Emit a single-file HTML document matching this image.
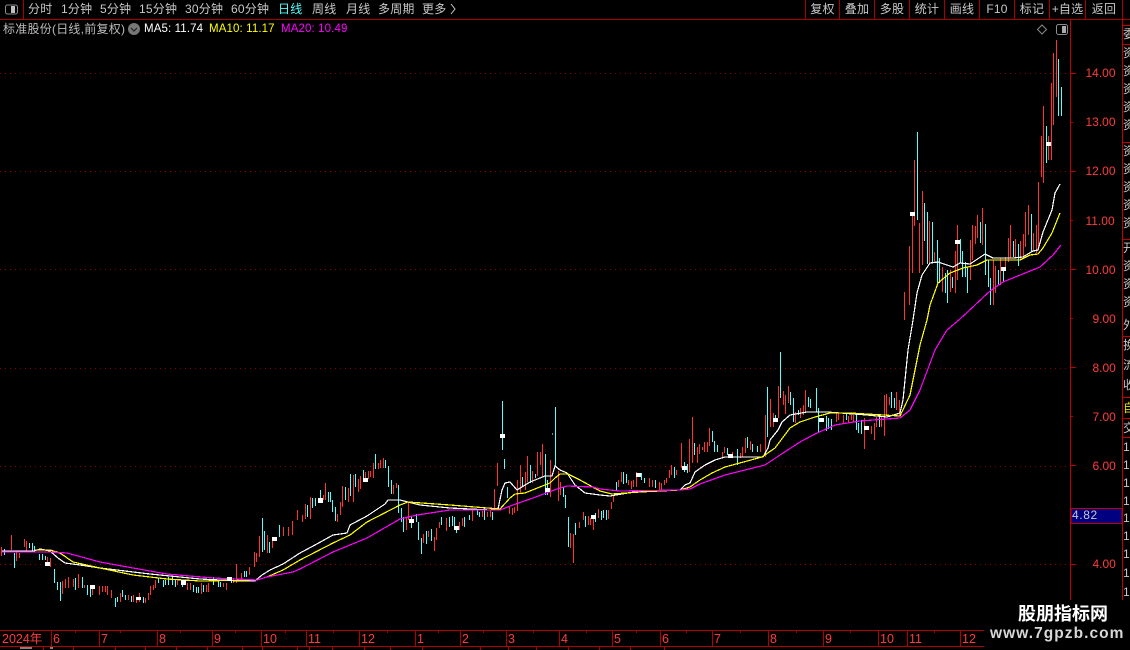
<!DOCTYPE html>
<html lang="zh-CN"><head><meta charset="utf-8"><title>标准股份</title>
<style>
html,body{margin:0;padding:0;background:#000}
#p{position:relative;width:1130px;height:650px;overflow:hidden;background:#000;font-family:"Liberation Sans","Noto Sans CJK SC",sans-serif;color:#c8c8c8}
svg{position:absolute;left:0;top:0}
.t{position:absolute;top:2px;height:16px;line-height:15px;font-size:12px;white-space:nowrap;letter-spacing:.2px}
.c{text-align:center}
.i{position:absolute;top:22px;line-height:14px;font-size:11.5px;white-space:nowrap;letter-spacing:.12px}
.pr{position:absolute;left:1085.5px;font-size:12px;line-height:14px;color:#ff3c3c}
.m{position:absolute;top:631px;font-size:12.5px;line-height:16px;color:#ff3c3c}
.rc{position:absolute;left:1123px;width:7px;overflow:hidden;font-size:12px;line-height:14px;color:#c8c8c8;white-space:nowrap}
#wm{position:absolute;left:984px;top:600px;width:146px;height:50px;background:#000}
#wm b{position:absolute;white-space:nowrap}
</style></head><body><div id="p">
<svg width="1130" height="650" viewBox="0 0 1130 650">
<g shape-rendering="crispEdges" fill="none">
<path stroke="#a80000" d="M0 19.5H1130M23.5 0V19M805.5 0V19M839.5 0V19M874.5 0V19M909.5 0V19M944.5 0V19M979.5 0V19M1014.5 0V19M1049.5 0V19M1085.5 0V19M1122.5 0V19"/>
<path stroke="#8c0000" stroke-dasharray="1 4" d="M0 73.5H1070M0 171.5H1070M0 269.5H1070M0 368.5H1070M0 466.5H1070M0 564.5H1070"/>
<path stroke="#c00000" d="M1070.5 19V600M1122.5 19V600M1122 25.5H1130M1122 44.5H1130M1122 142.5H1130M1122 239.5H1130M1122 336.5H1130M1122 397.5H1130M1122 418.5H1130M1122 437.5H1130"/>
<path stroke="#c00000" d="M1070 73.5H1076M1070 122.5H1073M1070 171.5H1076M1070 220.5H1073M1070 269.5H1076M1070 318.5H1073M1070 367.5H1076M1070 416.5H1073M1070 465.5H1076M1070 564.5H1076"/>
<path stroke="#b00000" d="M0 630.5H984M0 646.5H984M51.5 630V646M99.5 630V646M157.5 630V646M212.5 630V646M261.5 630V646M306.5 630V646M359.5 630V646M415.5 630V646M460.5 630V646M506.5 630V646M559.5 630V646M612.5 630V646M660.5 630V646M712.5 630V646M768.5 630V646M823.5 630V646M878.5 630V646M907.5 630V646M960.5 630V646M75.5 630V633M120.5 630V633M180.5 630V633M235.5 630V633M285.5 630V633M333.5 630V633M387.5 630V633M438.5 630V633M483.5 630V633M533.5 630V633M586.5 630V633M636.5 630V633M686.5 630V633M740.5 630V633M796.5 630V633M850.5 630V633M934.5 630V633M43.5 646V650M73.5 646V650M115.5 646V650M145.5 646V650M176.5 646V650M207.5 646V650M242.5 646V650M262.5 646V650M297.5 646V650M309.5 646V650M332.5 646V650M364.5 646V650M390.5 646V650M422.5 646V650M480.5 646V650M508.5 646V650M536.5 646V650M568.5 646V650M599.5 646V650M630.5 646V650M664.5 646V650"/>
<g transform="translate(.5 0)">
<path stroke="#ff3232" d="M1 547V556M11 535V550M16 552V561M19 553V558M24 539V547M26 541V551M47 557V562M50 558V567M62 581V594M65 579V588M68 577V588M73 579V587M78 574V588M84 585V588M92 587V595M99 586V595M102 586V592M105 586V592M107 586V595M111 590V598M120 593V602M128 595V600M133 595V602M136 597V603M139 593V602M145 598V603M148 593V600M150 586V595M153 585V590M155 580V588M177 580V585M187 583V590M190 583V590M201 583V594M206 585V592M208 583V592M223 583V587M226 583V590M233 578V583M236 564V583M241 573V580M249 567V575M254 552V567M256 553V562M259 536V557M267 535V553M272 540V548M283 527V536M288 527V536M292 521V535M297 510V520M302 515V522M305 504V519M310 497V519M323 495V500M325 483V500M337 514V522M340 502V515M342 486V507M348 488V502M353 475V502M358 479V492M360 476V489M365 472V480M368 471V479M370 471V477M373 463V478M378 463V469M380 460V468M383 458V468M393 485V494M396 483V488M406 518V530M408 502V520M423 534V543M428 531V537M434 537V551M436 528V540M439 522V528M446 518V531M459 522V530M462 518V526M472 510V521M482 511V517M487 512V517M490 510V517M494 489V509M497 463V486M509 507V514M512 508V515M514 507V513M517 480V511M520 465V493M525 472V490M527 456V482M532 471V483M537 452V476M540 452V465M542 444V477M550 460V497M558 471V501M560 482V495M570 533V548M573 534V563M579 522V528M583 512V520M588 516V525M590 518V525M593 517V530M598 509V518M608 510V519M611 502V509M613 496V502M618 480V487M621 472V482M628 480V485M631 481V489M633 480V487M636 472V487M649 478V487M652 480V487M659 482V490M661 483V491M664 480V485M666 478V483M669 470V478M671 465V475M676 470V475M681 443V468M689 439V472M692 417V463M697 447V463M699 444V454M702 447V450M704 442V452M707 442V452M709 428V446M722 452V457M724 447V453M732 452V458M740 453V458M742 447V457M745 438V453M750 441V450M760 444V452M765 415V457M770 399V427M773 413V427M778 386V418M783 391V405M785 395V414M788 386V403M795 412V423M800 408V418M803 405V415M805 390V413M836 412V422M838 413V420M843 415V423M848 416V423M851 415V420M853 415V422M864 418V449M871 426V434M874 423V440M876 417V427M881 416V427M884 395V436M886 394V415M889 397V405M896 392V410M899 400V415M904 292V320M909 246V305M912 215V273M914 160V226M919 223V273M922 191V265M929 221V263M934 252V263M942 267V292M950 270V292M955 251V293M957 225V280M970 240V280M972 225V260M975 226V244M977 215V238M982 208V245M993 260V305M995 266V293M1000 258V285M1005 257V268M1008 238V262M1010 225V258M1015 239V257M1020 241V260M1023 234V258M1025 212V247M1028 205V235M1033 233V250M1036 225V253M1038 182V247M1041 136V177M1043 106V183M1048 136V160M1051 83V160M1053 53V125M1056 40V97"/>
<path stroke="#54ffff" d="M4 549V555M14 553V568M29 543V548M32 543V551M34 546V552M39 554V560M42 554V560M45 556V560M54 569V583M57 582V590M60 582V601M75 578V590M82 577V588M87 585V595M90 588V597M115 598V607M117 597V602M122 590V597M125 595V600M131 596V602M143 597V603M158 578V583M163 580V587M165 580V585M168 577V585M172 577V585M175 580V587M182 580V587M193 585V592M196 587V593M198 587V593M203 585V592M213 577V585M218 580V587M220 582V587M231 578V583M244 571V577M246 571V577M262 518V552M264 531V550M269 542V553M279 525V537M307 505V517M312 498V508M315 498V506M320 490V500M328 492V502M330 492V502M332 500V512M335 507V521M345 487V500M350 474V496M355 474V487M363 470V480M375 454V469M385 460V468M388 466V487M391 480V494M398 485V513M401 508V522M403 517V532M411 517V528M416 514V522M418 522V540M421 538V554M426 531V544M431 529V541M441 517V525M449 517V527M452 516V526M454 517V527M456 528V533M464 517V527M469 515V520M477 509V515M479 512V517M484 508V520M492 512V520M502 401V450M504 459V469M507 487V498M522 477V486M530 465V483M535 474V478M545 454V495M547 480V495M555 407V467M563 487V497M565 495V508M568 517V547M575 523V535M585 516V527M595 513V522M601 511V520M603 510V518M606 510V520M616 482V490M623 472V484M626 474V483M641 473V480M644 478V483M655 480V488M674 467V478M684 462V472M687 464V473M694 443V455M712 431V442M714 441V452M717 445V452M727 448V455M737 449V465M747 437V448M752 444V452M757 446V452M767 387V437M775 415V420M780 352V398M790 392V405M793 398V422M798 410V415M808 397V407M810 399V408M816 388V412M818 408V432M826 416V431M828 418V429M831 419V430M846 413V420M856 415V430M858 423V433M861 420V434M879 417V427M891 392V408M894 398V408M917 132V220M924 203V241M927 212V264M932 222V262M937 240V283M939 258V283M945 273V293M947 270V303M952 277V288M960 239V263M962 251V277M965 262V277M967 267V293M980 222V243M985 224V275M988 260V287M990 278V305M998 270V285M1003 267V282M1013 241V257M1018 244V266M1031 214V252M1046 126V163M1058 59V116M1061 87V116"/>
</g>
<path stroke="#fff" stroke-width="1.2" d="M2 551H34L40 549L50 551L58 558L65 563L80 565L100 568L150 574L200 579L240 581H255L262 575L270 570L283 564L300 553L315 545L333 535L347 533L350 525L367 516L385 504L388 500H400L420 505L450 508L490 510L498 509L502 490L505 483L510 482L517 490L530 482L545 476H552L555 466L560 470L567 473L575 485L585 493L600 495L610 496L640 491L680 490L685 485L690 483L695 472L705 465L715 460L725 457H763L768 448L770 440L778 430L782 422L790 415L807 412H827L867 415L887 417L900 413L903 400L908 350L913 320L917 293L922 275L930 263L938 262L953 267L960 263L970 264L985 254L993 258H1013L1023 257L1033 251L1038 250L1043 232L1052 210L1055 193L1060 184"/>
<path stroke="#ff0" stroke-width="1.2" d="M35 550H50L60 553L73 562L100 568L133 575L167 579L200 581L257 580L267 577L283 570L300 560L333 543L350 535L367 522L400 505L408 502L450 505L500 509L510 498L515 494L525 493L550 483L555 478L560 474H568L580 480L600 491L612 494L640 492L680 490L690 487L700 480L712 473L725 467L762 457L775 448L790 428L800 422L815 417L830 413H850L900 416L910 395L920 345L927 320L930 305L938 283L950 273L963 268L977 265L987 260H1020L1030 255L1038 254L1043 248L1052 233L1060 213"/>
<path stroke="#f0f" stroke-width="1.2" d="M2 552H50L67 553L100 562L133 568L167 574L213 578L257 580L267 577L293 572L300 569L333 552L367 538L400 519L417 515L450 510H500L513 505L533 498L557 489L567 486L593 487L600 489L620 491L680 490L690 489L700 484L725 475L765 465L780 455L800 442L815 434L835 425L860 421L900 418L910 410L920 390L935 350L947 330L960 319L975 305L990 291L1003 282L1040 267L1053 255L1061 245"/>
<path fill="#fff" d="M45 562h5v4h-5zM90 585h5v4h-5zM136 597h5v3h-5zM181 580h5v5h-5zM227 577h5v4h-5zM272 537h5v4h-5zM318 498h5v5h-5zM363 478h5v4h-5zM409 519h5v4h-5zM454 526h5v4h-5zM500 434h5v4h-5zM545 488h5v4h-5zM591 515h5v4h-5zM636 473h5v4h-5zM682 466h5v4h-5zM728 454h5v4h-5zM773 418h5v4h-5zM819 418h5v4h-5zM864 426h5v4h-5zM910 212h5v4h-5zM955 240h5v4h-5zM1001 267h5v4h-5zM1046 142h5v4h-5z"/>
<path fill="#000080" stroke="#c00000" d="M1071 508.5H1122V523.5H1071Z"/>
<path stroke="#fff" d="M552 434h1M20 648h12M50 648h3"/>
<path stroke="#8a8a8a" d="M1037.5 29.5L1042 25L1046.5 29.5L1042 34Z" shape-rendering="auto"/>
</g>
<rect x="5.5" y="5" width="12" height="9" rx="2" fill="none" stroke="#8c8c8c"/>
<rect x="11" y="6" width="4" height="7" fill="#c0c0c0"/>
<rect x="1056.5" y="24.5" width="11" height="10" rx="2" fill="none" stroke="#8c8c8c"/>
<rect x="1062" y="26" width="4" height="7" fill="#aaa"/>
<circle cx="134" cy="29" r="6" fill="#777"/>
<path d="M131 28l3 3 3-3" fill="none" stroke="#222" stroke-width="1.2"/>
<path d="M451 4l4 5-4 5" fill="none" stroke="#c8c8c8"/>
</svg>
<div class="t" style="left:28px">分时</div><div class="t" style="left:61px">1分钟</div><div class="t" style="left:100px">5分钟</div><div class="t" style="left:139px">15分钟</div><div class="t" style="left:185px">30分钟</div><div class="t" style="left:231px">60分钟</div><div class="t" style="left:278px;color:#54ffff">日线</div><div class="t" style="left:312px">周线</div><div class="t" style="left:346px">月线</div><div class="t" style="left:378px">多周期</div><div class="t" style="left:422px">更多</div>
<div class="t c" style="left:806px;width:33px">复权</div><div class="t c" style="left:840px;width:34px">叠加</div><div class="t c" style="left:875px;width:34px">多股</div><div class="t c" style="left:910px;width:34px">统计</div><div class="t c" style="left:945px;width:34px">画线</div><div class="t c" style="left:980px;width:34px">F10</div><div class="t c" style="left:1015px;width:34px">标记</div><div class="t c" style="left:1050px;width:35px">+自选</div><div class="t c" style="left:1086px;width:36px">返回</div>
<div class="i" style="left:3px;color:#bbb;font-size:12px;letter-spacing:.02em">标准股份(日线,前复权)</div>
<div class="i" style="left:144px;color:#fff">MA5: 11.74</div><div class="i" style="left:209px;color:#ff0">MA10: 11.17</div><div class="i" style="left:281px;color:#f0f">MA20: 10.49</div>
<div class="pr" style="top:66px">14.00</div><div class="pr" style="top:115px">13.00</div><div class="pr" style="top:164px">12.00</div><div class="pr" style="top:214px">11.00</div><div class="pr" style="top:263px">10.00</div><div class="pr" style="top:312px;left:1092.5px">9.00</div><div class="pr" style="top:361px;left:1092.5px">8.00</div><div class="pr" style="top:410px;left:1092.5px">7.00</div><div class="pr" style="top:459px;left:1092.5px">6.00</div><div class="pr" style="top:557px;left:1092.5px">4.00</div>
<div style="position:absolute;left:1072px;top:508px;font-size:12px;line-height:15px;color:#c8c8c8;letter-spacing:.6px">4.82</div>
<div class="m" style="left:2px">2024年</div><div class="m" style="left:53px">6</div><div class="m" style="left:101px">7</div><div class="m" style="left:159px">8</div><div class="m" style="left:214px">9</div><div class="m" style="left:263px">10</div><div class="m" style="left:308px">11</div><div class="m" style="left:361px">12</div><div class="m" style="left:417px">1</div><div class="m" style="left:462px">2</div><div class="m" style="left:508px">3</div><div class="m" style="left:561px">4</div><div class="m" style="left:614px">5</div><div class="m" style="left:662px">6</div><div class="m" style="left:714px">7</div><div class="m" style="left:770px">8</div><div class="m" style="left:825px">9</div><div class="m" style="left:880px">10</div><div class="m" style="left:909px">11</div><div class="m" style="left:962px">12</div>
<div class="rc" style="top:27px">委</div><div class="rc" style="top:46px">资</div><div class="rc" style="top:64px">资</div><div class="rc" style="top:82px">资</div><div class="rc" style="top:100px">资</div><div class="rc" style="top:118px">资</div><div class="rc" style="top:144px">资</div><div class="rc" style="top:162px">资</div><div class="rc" style="top:180px">资</div><div class="rc" style="top:198px">资</div><div class="rc" style="top:216px">资</div><div class="rc" style="top:241px">开</div><div class="rc" style="top:259px">资</div><div class="rc" style="top:277px">资</div><div class="rc" style="top:295px">资</div><div class="rc" style="top:318px">外</div><div class="rc" style="top:338px">换</div><div class="rc" style="top:358px">流</div><div class="rc" style="top:378px">收</div><div class="rc" style="top:401px;color:#e0e000">自</div><div class="rc" style="top:421px">交</div>
<div class="rc" style="top:440px">1</div><div class="rc" style="top:458px">1</div><div class="rc" style="top:476px">1</div><div class="rc" style="top:494px">1</div><div class="rc" style="top:511px">1</div><div class="rc" style="top:529px">1</div><div class="rc" style="top:547px">1</div><div class="rc" style="top:566px">1</div><div class="rc" style="top:585px">1</div>
<div id="wm"><b style="left:34px;top:3px;font-size:18px;line-height:22px;color:#fff;letter-spacing:0">股朋指标网</b><b style="left:6px;top:24px;font-size:15.5px;line-height:20px;color:#d8d8d8;letter-spacing:1.05px">www.7gpzb.com</b></div>
</div></body></html>
